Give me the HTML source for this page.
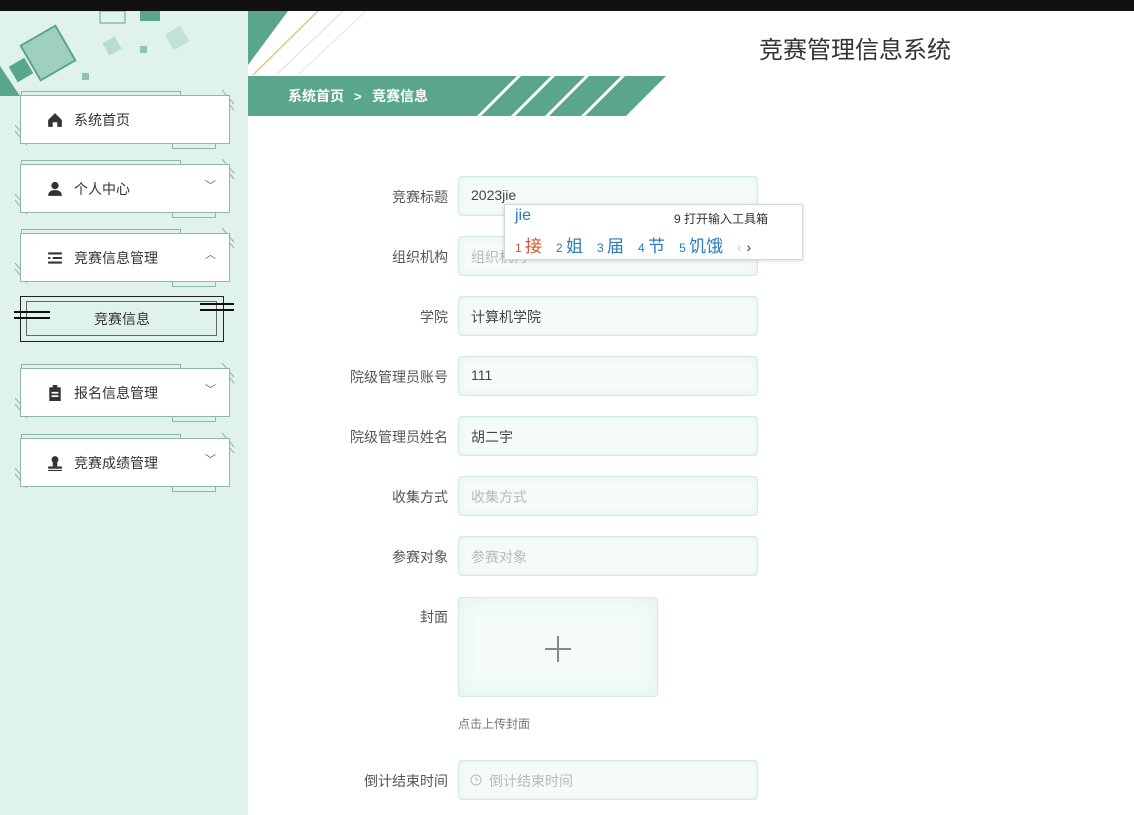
<!DOCTYPE html>
<html><head><meta charset="utf-8"><style>
*{margin:0;padding:0;box-sizing:border-box}
body{width:1134px;height:815px;overflow:hidden;background:#fff;font-family:"Liberation Sans","Noto Sans CJK SC",sans-serif;position:relative;color:#333}
.top{position:absolute;left:0;top:0;width:1134px;height:11px;background:#111}
.side{position:absolute;left:0;top:11px;width:248px;height:804px;background:#dff3ec}
.abs{position:absolute}
.item{position:absolute;left:20px;width:210px;height:49px;background:#fff;border:1.5px solid #8fb8a8;font-size:14px;color:#333}
.item .t{position:absolute;left:53px;top:14px}
.item .ic{position:absolute;left:26px;top:16px;width:16px;height:16px}
.item .ar{position:absolute;left:184px;top:12px;font-size:11px;color:#666}
.item:before{content:"";position:absolute;left:0;top:-5px;width:158px;height:4px;border:1px solid #8fb8a8;border-bottom:none}
.item:after{content:"";position:absolute;left:151px;bottom:-6px;width:42px;height:5px;border:1px solid #8fb8a8;border-top:none}
.hz{position:absolute}
.lbl{position:absolute;right:686px;font-size:14px;color:#555;text-align:right;white-space:nowrap}
.inp{position:absolute;left:458px;width:300px;height:40px;background:#f4fbf9;border:1px solid #d3ebe2;border-radius:3px;box-shadow:inset 0 0 8px #e2f3ed;font-size:14px;color:#444;padding:10px 12px}
.ph{color:#b5bcb9}
</style></head><body>
<div class="top"></div>
<div class="side">
<svg class="abs" style="left:0;top:0" width="248" height="85">
<polygon points="0,55 20,85 0,85" fill="#5aa68a"/>
<rect x="28" y="22" width="40" height="40" fill="#9fcfbd" stroke="#5aa68a" stroke-width="2" transform="rotate(-30 48 42)"/>
<rect x="12" y="50" width="18" height="18" fill="#5aa68a" transform="rotate(-30 21 59)"/>
<rect x="105" y="28" width="14" height="14" fill="#b7ddd0" transform="rotate(-30 112 35)"/>
<rect x="168" y="18" width="18" height="18" fill="#c2e2d6" transform="rotate(-30 177 27)"/>
<rect x="140" y="35" width="7" height="7" fill="#8cc4ae"/>
<rect x="82" y="62" width="7" height="7" fill="#8cc4ae"/>
<rect x="140" y="0" width="20" height="10" fill="#5aa68a"/>
<rect x="100" y="0" width="25" height="12" fill="none" stroke="#5aa68a"/>
</svg>
</div>
<svg class="abs" style="left:0;top:0" width="248" height="500">
<g stroke="#8fb8a8" stroke-width="1">
<g id="h"><line x1="222" y1="90" x2="234" y2="104"/><line x1="222" y1="96" x2="234" y2="110"/><line x1="15" y1="125" x2="27" y2="139"/><line x1="15" y1="131" x2="27" y2="145"/></g>
<use href="#h" y="69"/><use href="#h" y="138"/><use href="#h" y="273"/><use href="#h" y="343"/>
</g></svg>
<div class="item" style="top:95px"><svg class="ic" viewBox="0 0 14 14"><path d="M7 1L1 7v6h4V9h4v4h4V7z" fill="#333"/></svg><span class="t">系统首页</span></div>
<div class="item" style="top:164px"><svg class="ic" viewBox="0 0 14 14"><circle cx="7" cy="4" r="3.2" fill="#333"/><path d="M1 13c0-4 3-5 6-5s6 1 6 5z" fill="#333"/></svg><span class="t">个人中心</span><span class="ar">﹀</span></div>
<div class="item" style="top:233px"><svg class="ic" viewBox="0 0 14 14"><path d="M1 3h12M5 7h8M1 11h12M1 7h2" stroke="#333" stroke-width="1.8"/></svg><span class="t">竞赛信息管理</span><span class="ar">︿</span></div>
<div class="abs" style="left:20px;top:296px;width:204px;height:46px;border:1.5px solid #222"><div class="abs" style="left:5px;top:4px;width:191px;height:35px;border:1px solid #666"></div><span class="abs" style="left:73px;top:12px;font-size:14px;color:#333">竞赛信息</span></div>
<div class="abs" style="left:14px;top:311px;width:36px;height:8px;border-top:2px solid #111;border-bottom:2px solid #111"></div>
<div class="abs" style="left:200px;top:303px;width:34px;height:8px;border-top:2px solid #111;border-bottom:2px solid #111"></div>
<div class="item" style="top:368px"><svg class="ic" viewBox="0 0 14 14"><rect x="2" y="2" width="10" height="12" fill="#333"/><rect x="5" y="0" width="4" height="3" fill="#333"/><rect x="4" y="6" width="6" height="1.5" fill="#fff"/><rect x="4" y="9" width="6" height="1.5" fill="#fff"/></svg><span class="t">报名信息管理</span><span class="ar">﹀</span></div>
<div class="item" style="top:438px"><svg class="ic" viewBox="0 0 14 14"><circle cx="7" cy="4" r="3" fill="#333"/><rect x="5" y="6" width="4" height="4" fill="#333"/><rect x="1" y="10" width="12" height="2" fill="#333"/><rect x="1" y="13" width="12" height="1" fill="#333"/></svg><span class="t">竞赛成绩管理</span><span class="ar">﹀</span></div>

<svg class="abs" style="left:248px;top:11px" width="420" height="106">
<polygon points="0,0 40,0 0,54" fill="#5aa68a"/>
<line x1="5" y1="64" x2="70" y2="0" stroke="#d8c98a" stroke-width="1.5"/>
<line x1="28" y1="64" x2="95" y2="0" stroke="#ddd" stroke-width="1"/>
<line x1="50" y1="64" x2="118" y2="0" stroke="#e5e5e5" stroke-width="1"/>
<polygon points="0,65 418,65 378,105 0,105" fill="#5aa68a"/>
<g stroke="#fff" stroke-width="3"><line x1="230" y1="106" x2="272" y2="64"/><line x1="264" y1="106" x2="306" y2="64"/><line x1="298" y1="106" x2="340" y2="64"/><line x1="334" y1="106" x2="376" y2="64"/></g>
<text x="40" y="90" font-size="14" font-weight="bold" fill="#fff" font-family="Liberation Sans,Noto Sans CJK SC,sans-serif">系统首页</text>
<text x="106" y="90" font-size="13" font-weight="bold" fill="#fff">&gt;</text>
<text x="124" y="90" font-size="14" font-weight="bold" fill="#fff" font-family="Liberation Sans,Noto Sans CJK SC,sans-serif">竞赛信息</text>
</svg>
<div class="abs" style="left:759px;top:30px;font-size:24px;color:#333">竞赛管理信息系统</div>

<div class="lbl" style="top:187px">竞赛标题</div><div class="inp" style="top:176px">2023jie</div>
<div class="lbl" style="top:247px">组织机构</div><div class="inp ph" style="top:236px">组织机构</div>
<div class="lbl" style="top:307px">学院</div><div class="inp" style="top:296px">计算机学院</div>
<div class="lbl" style="top:367px">院级管理员账号</div><div class="inp" style="top:356px">111</div>
<div class="lbl" style="top:427px">院级管理员姓名</div><div class="inp" style="top:416px">胡二宇</div>
<div class="lbl" style="top:487px">收集方式</div><div class="inp ph" style="top:476px">收集方式</div>
<div class="lbl" style="top:547px">参赛对象</div><div class="inp ph" style="top:536px">参赛对象</div>
<div class="lbl" style="top:607px">封面</div>
<div class="inp" style="top:597px;width:200px;height:100px;box-shadow:inset 0 0 20px #e0f2eb"><div class="abs" style="left:86px;top:50px;width:26px;height:2px;background:#888"></div><div class="abs" style="left:98px;top:38px;width:2px;height:26px;background:#888"></div></div>
<div class="abs" style="left:458px;top:715px;font-size:12px;color:#777">点击上传封面</div>
<div class="lbl" style="top:771px">倒计结束时间</div><div class="inp ph" style="top:760px;padding-left:30px">倒计结束时间<svg class="abs" style="left:11px;top:13px" width="12" height="12"><circle cx="6" cy="6" r="5" fill="none" stroke="#bbb"/><path d="M6 3v3h2.5" stroke="#bbb" fill="none"/></svg></div>

<div class="abs" style="left:504px;top:204px;width:299px;height:56px;background:#fff;border:1px solid #cfd8dc;box-shadow:0 1px 4px rgba(0,0,0,.15)">
<span class="abs" style="left:10px;top:2px;font-size:16px;color:#2a7bbf">jie</span>
<span class="abs" style="left:169px;top:5px;font-size:12px;color:#333">9 打开输入工具箱</span>
<div class="abs" style="left:10px;top:27px;font-size:17px;white-space:nowrap;color:#2a7bbf;word-spacing:0"><span style="color:#d4542a"><small style="font-size:12px">1 </small>接</span><span style="display:inline-block;width:14px"></span><small style="font-size:12px">2 </small>姐<span style="display:inline-block;width:14px"></span><small style="font-size:12px">3 </small>届<span style="display:inline-block;width:14px"></span><small style="font-size:12px">4 </small>节<span style="display:inline-block;width:14px"></span><small style="font-size:12px">5 </small>饥饿<span style="display:inline-block;width:14px"></span><small style="font-size:14px;color:#ccc">‹</small> <small style="font-size:14px;color:#333">›</small></div>
</div>
</body></html>
